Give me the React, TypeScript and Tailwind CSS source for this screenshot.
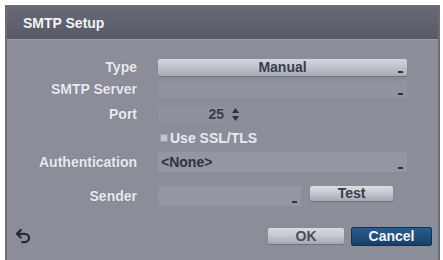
import { Undo2 } from 'lucide-react';

const font = { fontFamily: '"Liberation Sans", Arial, sans-serif' };

function Label({ text }: { text: string }) {
  return (
    <div className="w-[130px] shrink-0 text-right text-[14px] font-bold text-[#e8eaf0] [text-shadow:0_0_1px_#6d707c]">
      {text}
    </div>
  );
}

function Dash() {
  return <span className="absolute right-[4px] bottom-[3px] w-[5px] h-[2px] bg-[#2e3140]" />;
}

export default function App() {
  return (
    <div className="w-[443px] h-[260px] bg-white pt-[5px] pl-[5px] pr-[3px]" style={font}>
      <div className="h-full flex flex-col border-t-2 border-l-2 border-r-2 border-[#6a6c79] bg-[#8b8e99]">
        <div className="h-[33px] shrink-0 flex items-center pl-[16px] bg-gradient-to-b from-[#676973] to-[#575967] border-b border-[#9a9ca6]">
          <span className="text-[14px] font-bold text-[#f2f3f6]">SMTP Setup</span>
        </div>

        <div className="mt-[16px] h-[22px] flex items-center">
          <Label text="Type" />
          <div className="relative ml-[21px] w-[249px] h-[17px] rounded-[2px] bg-gradient-to-b from-[#d3d6dc] via-[#bfc2ca] to-[#a6aab4] flex items-center justify-center shadow-[0_1px_1px_#6e717d]">
            <span className="text-[14px] font-bold text-[#3a3d4b]">Manual</span>
            <Dash />
          </div>
        </div>

        <div className="h-[23px] flex items-center">
          <Label text="SMTP Server" />
          <div className="relative ml-[21px] w-[249px] h-[17px] bg-[#9094a0]">
            <Dash />
          </div>
        </div>

        <div className="h-[26px] flex items-center">
          <Label text="Port" />
          <div className="ml-[21px] w-[66px] h-[17px] flex items-center justify-end bg-[#8f929e]">
            <span className="text-[14px] font-bold text-[#3a3d4b]">25</span>
          </div>
          <div className="ml-[8px] flex flex-col items-center gap-[3px]">
            <svg width="7" height="5" viewBox="0 0 7 5"><path d="M3.5 0 7 5H0z" fill="#2e3140" /></svg>
            <svg width="7" height="5" viewBox="0 0 7 5"><path d="M0 0h7L3.5 5z" fill="#2e3140" /></svg>
          </div>
        </div>

        <div className="h-[22px] flex items-center">
          <div className="w-[130px] shrink-0" />
          <div className="ml-[23px] w-[8px] h-[8px] bg-[#c3c5cc] border border-[#9ea1ab]" />
          <span className="ml-[2px] text-[14px] font-bold text-[#e8eaf0]">Use SSL/TLS</span>
        </div>

        <div className="h-[26px] flex items-center">
          <Label text="Authentication" />
          <div className="relative ml-[21px] w-[249px] h-[20px] bg-[#9397a3] flex items-center pl-[3px]">
            <span className="text-[14px] font-bold text-[#2f3240]">&lt;None&gt;</span>
            <Dash />
          </div>
        </div>

        <div className="mt-[10px] h-[22px] flex items-center">
          <Label text="Sender" />
          <div className="relative ml-[21px] w-[143px] h-[20px] bg-[#9397a3]">
            <Dash />
          </div>
          <button className="ml-[9px] self-start mt-[1px] w-[83px] h-[15px] rounded-[2px] bg-gradient-to-b from-[#dcdee3] via-[#c4c7ce] to-[#a3a7b1] shadow-[0_1px_1px_#6e717d] flex items-center justify-center text-[14px] font-bold text-[#3a3d4b]">
            Test
          </button>
        </div>

        <div className="mt-auto mb-[13px] h-[22px] flex items-center">
          <div className="ml-[7px] w-[18px] h-[18px] flex items-center justify-center">
            <Undo2 size={18} strokeWidth={3} color="#262936" />
          </div>
          <button className="ml-auto w-[76px] h-[16px] rounded-[2px] bg-gradient-to-b from-[#dadce1] via-[#c3c6cd] to-[#a4a8b2] shadow-[0_1px_1px_#6e717d] flex items-center justify-center text-[14px] font-bold text-[#4a4d5a]">
            OK
          </button>
          <button className="ml-[7px] mr-[6px] w-[81px] h-[19px] rounded-[2px] bg-gradient-to-b from-[#2a5d8f] to-[#163f69] border border-[#13304f] flex items-center justify-center text-[14px] font-bold text-[#eef2f8]">
            Cancel
          </button>
        </div>
      </div>
    </div>
  );
}
